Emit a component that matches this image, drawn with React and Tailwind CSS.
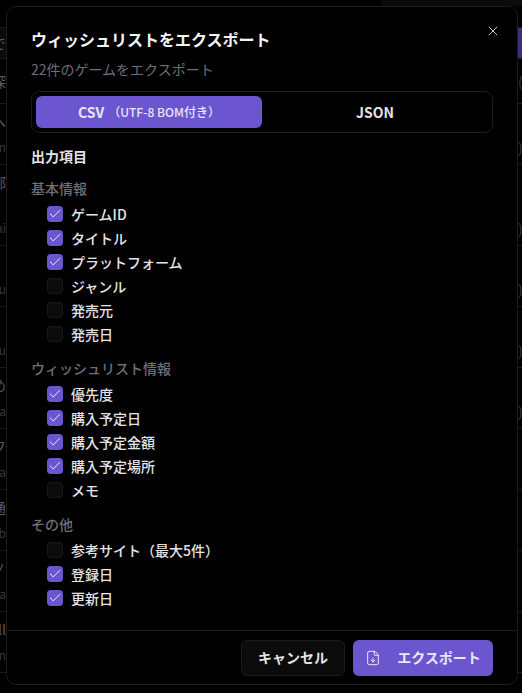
import { Check, X, FileDown } from 'lucide-react';

const sections = [
  {
    title: '基本情報',
    items: [
      ['ゲームID', true],
      ['タイトル', true],
      ['プラットフォーム', true],
      ['ジャンル', false],
      ['発売元', false],
      ['発売日', false],
    ],
  },
  {
    title: 'ウィッシュリスト情報',
    items: [
      ['優先度', true],
      ['購入予定日', true],
      ['購入予定金額', true],
      ['購入予定場所', true],
      ['メモ', false],
    ],
  },
  {
    title: 'その他',
    items: [
      ['参考サイト（最大5件）', false],
      ['登録日', true],
      ['更新日', true],
    ],
  },
];

// 後ろの一覧（モーダルの外に少しだけ見える）
const rows = [
  { h: 'h-[45px]', left: ['深'], right: '(' },
  { h: 'h-[61px]', left: ['へ', 'in'], right: ')' },
  { h: 'h-[81px]', left: ['邮', 'ai'], right: ')', gap: 'gap-[26px]' },
  { h: 'h-[61px]', left: ['', 'u'], right: ')' },
  { h: 'h-[61px]', left: ['', 'u'], right: ')' },
  { h: 'h-[61px]', left: ['め', 'a'], right: ')' },
  { h: 'h-[61px]', left: ['フ', 'la'], right: '' },
  { h: 'h-[61px]', left: ['通', 'b'], right: '' },
  { h: 'h-[61px]', left: ['ノ', 'la'], right: '' },
  { h: 'h-[61px]', left: ['ll', 'in'], right: '' },
];

function BackRow({ h, left, right, gap }) {
  const single = left.length === 1;
  return (
    <div className={`${h} flex justify-between border-t border-[#1a1a1c]`}>
      <div className={`flex w-[6px] flex-col items-end justify-center overflow-hidden ${gap || 'gap-[6px]'}`}>
        <span className="h-5 whitespace-nowrap text-[14px] leading-5 text-[#5a5a60]">{left[0]}</span>
        {!single && <span className="h-5 whitespace-nowrap text-[12px] leading-5 text-[#3a3a40]">{left[1]}</span>}
      </div>
      <div className={`flex w-[4px] flex-col justify-center overflow-hidden ${gap || 'gap-[6px]'}`}>
        {!single && <span className="h-5" />}
        <span className="h-5 text-[14px] leading-5 text-[#3a3a40]">{right}</span>
      </div>
    </div>
  );
}

function Field({ label, checked }) {
  return (
    <label className="flex h-6 items-center gap-2">
      <span
        className={
          checked
            ? 'flex h-4 w-4 items-center justify-center rounded-[4px] bg-[#6c56cf] text-white'
            : 'flex h-4 w-4 items-center justify-center rounded-[4px] border border-[#1c1c1e] bg-[#0b0b0c]'
        }
      >
        {checked && <Check size={14} strokeWidth={1.5} />}
      </span>
      <span className="text-[14px] font-medium text-[#e4e4e7]">{label}</span>
    </label>
  );
}

export default function App() {
  return (
    <div className="relative h-[693px] w-[522px] overflow-hidden bg-black font-['Noto_Sans_CJK_JP','Noto_Sans',sans-serif]">
      <div className="h-[27px]">
        <div className="ml-[381px] h-[6px] bg-[#0b0b0d]" />
      </div>
      <div className="flex h-[31px] justify-between border-t border-[#1a1a1c] bg-[#0b0b0d]">
        <div className="flex w-[6px] items-center justify-end overflow-hidden whitespace-nowrap text-[14px] text-[#5a5a60]">で</div>
        <div className="w-[4px] bg-[#3b2f7a]" />
      </div>
      {rows.map((row, i) => (
        <BackRow key={i} {...row} />
      ))}
      <div className="border-t border-[#1a1a1c]" />

      <div className="absolute left-[6px] top-[6px] flex h-[679px] w-[512px] flex-col rounded-[10px] border border-[#1c1c1e] bg-black">
        <button className="absolute right-[16px] top-[16px] text-[#c8c8cc]">
          <X size={16} strokeWidth={1.5} />
        </button>

        <div className="flex-1 px-6 pt-5">
          <h2 className="text-[16px] font-bold leading-6 text-[#f4f4f5]">ウィッシュリストをエクスポート</h2>
          <p className="mt-2 text-[14px] leading-5 text-[#6f6f76]">22件のゲームをエクスポート</p>

          <div className="mt-3 flex h-[42px] rounded-lg border border-[#1c1c1e] p-1">
            <button className="flex flex-1 items-center justify-center gap-1 rounded-md bg-[#6c56cf] text-[#e9e6f8]">
              <span className="text-[14px] font-bold">CSV</span>
              <span className="text-[12px] font-medium">（UTF-8 BOM付き）</span>
            </button>
            <button className="flex-1 text-[14px] font-bold text-[#e4e4e7]">JSON</button>
          </div>

          <h3 className="mb-3 mt-[13px] text-[14px] font-bold leading-5 text-[#e4e4e7]">出力項目</h3>

          <div className="flex flex-col gap-3">
            {sections.map((s) => (
              <section key={s.title}>
                <h4 className="text-[14px] font-medium leading-5 text-[#6f6f76]">{s.title}</h4>
                <div className="mt-1 pl-4">
                  {s.items.map(([label, checked]) => (
                    <Field key={label} label={label} checked={checked} />
                  ))}
                </div>
              </section>
            ))}
          </div>
        </div>

        <div className="flex h-[54px] items-center justify-end gap-2 border-t border-[#1c1c1e] px-6">
          <button className="h-9 w-[104px] rounded-md border border-[#1c1c1e] bg-[#0b0b0c] text-[14px] font-bold text-[#e4e4e7]">
            キャンセル
          </button>
          <button className="flex h-9 w-[140px] items-center justify-center gap-4 rounded-md bg-[#6c56cf] text-[14px] font-bold text-[#e9e6f8]">
            <FileDown size={16} strokeWidth={1.5} />
            エクスポート
          </button>
        </div>
      </div>
    </div>
  );
}
